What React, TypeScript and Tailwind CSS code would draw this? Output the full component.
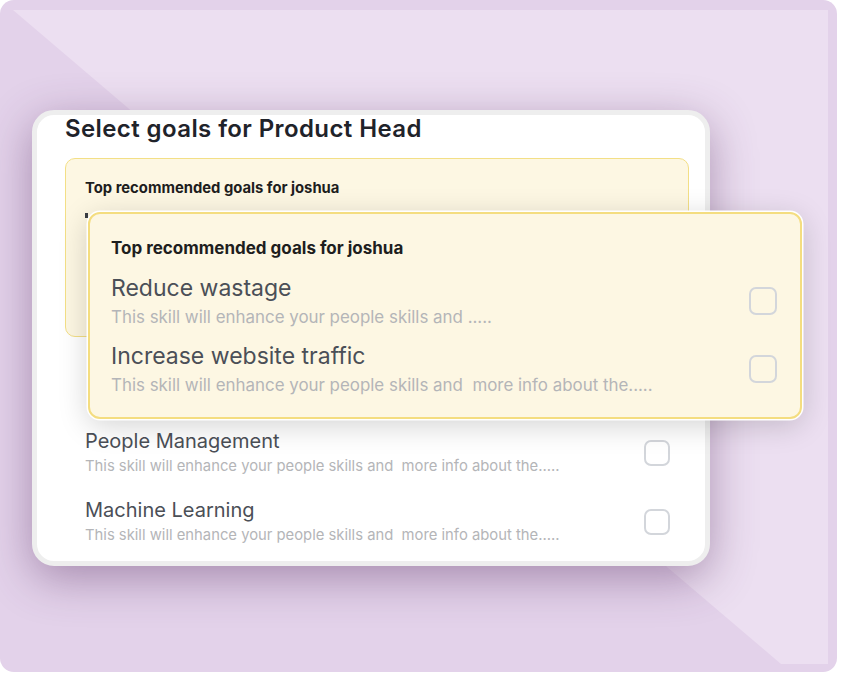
import React from 'react';

interface Goal {
  title: string;
  desc: string;
}

const topGoals: Goal[] = [
  { title: 'Reduce wastage', desc: 'This skill will enhance your people skills and .....' },
  { title: 'Increase website traffic', desc: 'This skill will enhance your people skills and  more info about the.....' },
];

const otherGoals: Goal[] = [
  { title: 'People Management', desc: 'This skill will enhance your people skills and  more info about the.....' },
  { title: 'Machine Learning', desc: 'This skill will enhance your people skills and  more info about the.....' },
];

const Checkbox: React.FC<{ size: 'sm' | 'lg' }> = ({ size }) => (
  <div
    className={
      size === 'lg'
        ? 'w-[28px] h-[28px] shrink-0 rounded-[7px] border-2 border-[#d3d6db]'
        : 'w-[26px] h-[26px] shrink-0 rounded-[7px] border-2 border-[#d3d6db]'
    }
  />
);

const App: React.FC = () => {
  return (
    <div className="w-[841px] h-[676px] bg-white font-['Inter',sans-serif]">
      <div className="relative w-[837px] h-[672px] rounded-[14px] bg-[#e3d2ea] overflow-hidden">
        {/* lighter diagonal backdrop */}
        <div className="absolute inset-0 bg-[#ecdff1] [clip-path:polygon(13px_10px,828px_10px,828px_664px,781px_664px)]" />

        <div className="relative pt-[110px] pl-[32px]">
          <div className="relative w-[678px] h-[456px] rounded-[22px] border-[5px] border-[#eeeeee] bg-white shadow-[0_12px_45px_rgba(90,50,100,0.45)]">
            <div className="pl-[28px] pr-[16px]">
              <h1 className="text-[24px] leading-[28px] font-semibold text-[#1f232a] tracking-[0.4px]">
                Select goals for Product Head
              </h1>

              <div className="mt-[15px] h-[179px] rounded-[10px] border-[1.5px] border-[#f3df86] bg-[#fdf7e3] pl-[19px] pt-[19px]">
                <p className="text-[14.8px] leading-[20px] font-bold text-[#1e1e1e]">
                  Top recommended goals for joshua
                </p>
                {/* corner of the first item peeking out from under the pop-out */}
                <div className="mt-[15px] w-[3px] h-[5px] bg-[#3a3d43]" />
              </div>

              <div className="mt-[92px] flex flex-col gap-[22px] pl-[20px] pr-[19px]">
                {otherGoals.map((g) => (
                  <div key={g.title} className="flex items-center justify-between">
                    <div>
                      <p className="text-[20px] leading-[24px] text-[#4b4f57]">{g.title}</p>
                      <p className="mt-[3px] text-[14.8px] leading-[20px] text-[#b4b5b8] whitespace-pre">{g.desc}</p>
                    </div>
                    <Checkbox size="sm" />
                  </div>
                ))}
              </div>
            </div>

            {/* highlighted recommendations popping out of the card */}
            <div className="absolute left-[51px] top-[97px] w-[714px] h-[207px] rounded-[12px] border-2 border-[#f4dd80] bg-[#fdf7e3] pl-[21px] pr-[23px] pt-[23px] shadow-[0_0_0_1.5px_#ffffff,0_6px_30px_rgba(0,0,0,0.18)]">
              <p className="text-[17px] leading-[22px] font-bold text-[#1e1e1e]">
                Top recommended goals for joshua
              </p>
              <div className="mt-[15px] flex flex-col gap-[14px]">
                {topGoals.map((g) => (
                  <div key={g.title} className="flex items-center justify-between">
                    <div>
                      <p className="text-[23px] leading-[28px] text-[#4b4f57]">{g.title}</p>
                      <p className="mt-[4px] text-[16.9px] leading-[22px] text-[#b4b5b8] whitespace-pre">{g.desc}</p>
                    </div>
                    <Checkbox size="lg" />
                  </div>
                ))}
              </div>
            </div>
          </div>
        </div>
      </div>
    </div>
  );
};

export default App;
